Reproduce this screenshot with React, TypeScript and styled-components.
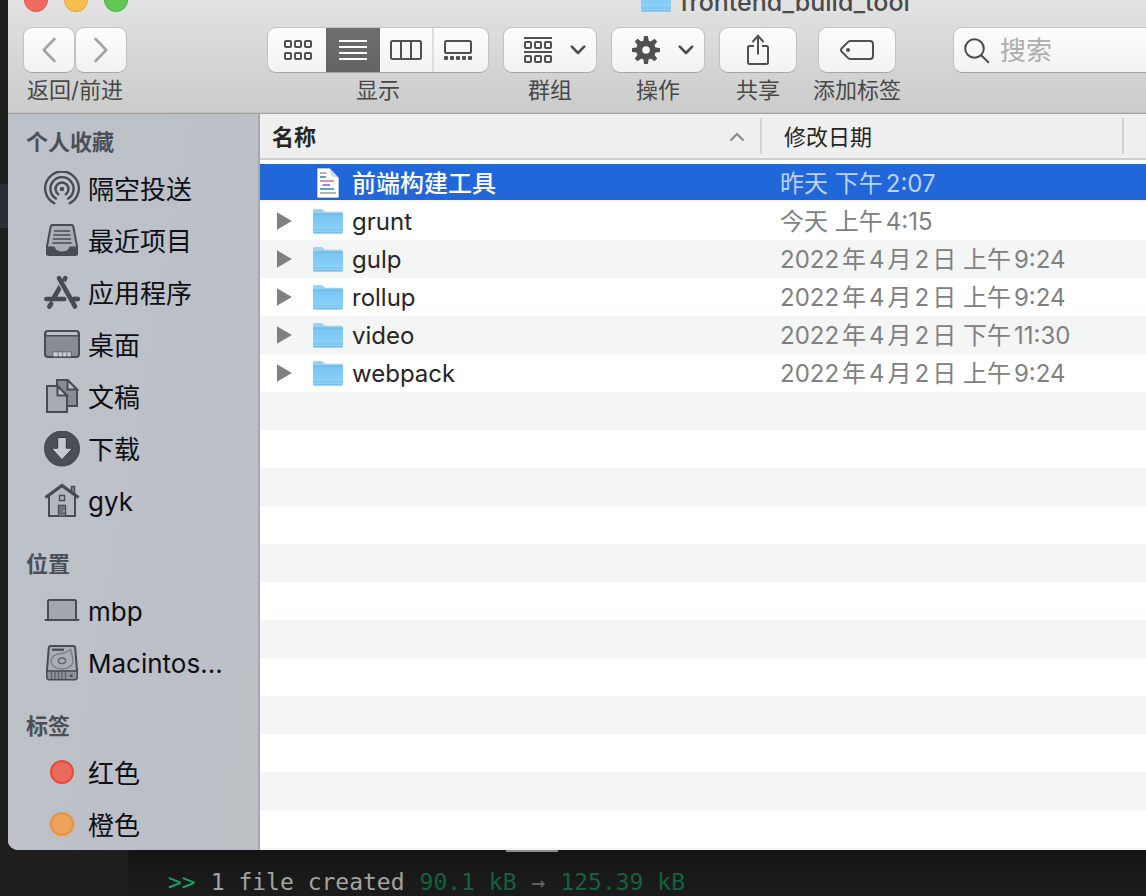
import React from "react";
import styled, { createGlobalStyle } from "styled-components";

const GlobalStyle = createGlobalStyle`
  * { box-sizing: border-box; }
  body {
    margin: 0;
    background: #1e1e1e;
    font-family: Inter, "Noto Sans CJK SC", sans-serif;
    color: #262626;
    overflow: hidden;
  }
  button, input { font: inherit; color: inherit; }
`;

const Page = styled.div`
  height: 100vh;
  display: flex;
  flex-direction: column;
`;

const Desk = styled.div`
  flex: 1;
  min-height: 0;
  display: flex;
`;

const Gutter = styled.div`
  width: 8px;
  flex: none;
  padding-top: 184px;
`;

const GutterMark = styled.div`
  height: 44px;
  background: #2d2d33;
`;

const Window = styled.main`
  flex: 1;
  min-width: 0;
  display: flex;
  flex-direction: column;
  overflow: hidden;
  border-radius: 0 0 0 10px;
  background: #fff;
`;

/* ---------- title and tool bar ---------- */

const Toolbar = styled.header`
  flex: none;
  height: 114px;
  overflow: hidden;
  background: linear-gradient(#e2e2e2, #cbcbcb);
  border-bottom: 1px solid #a3a3a3;
  box-shadow: inset 0 -1px #bebebe;
`;

const TitleBar = styled.div`
  height: 12px;
  padding-left: 16px;
  display: flex;
  align-items: flex-end;
`;

const Lights = styled.div`
  display: flex;
  gap: 16px;
`;

const Light = styled.button<{ $fill: string; $edge: string }>`
  width: 24px;
  height: 24px;
  padding: 0;
  border-radius: 50%;
  border: 1px solid ${(p) => p.$edge};
  background: ${(p) => p.$fill};
`;

const Title = styled.h1`
  margin: 0 0 0 512px;
  display: flex;
  align-items: flex-end;
  gap: 8px;
  font-size: 25px;
  line-height: 20px;
  font-weight: 500;
  color: #4a4a4a;
`;

const Tools = styled.div`
  display: flex;
  align-items: flex-start;
  gap: 16px;
  padding: 15px 0 0 15px;
`;

const Tool = styled.div<{ $after?: number }>`
  flex: none;
  display: flex;
  flex-direction: column;
  align-items: center;
  margin-right: ${(p) => p.$after ?? 0}px;
`;

const ToolLabel = styled.span`
  font-size: 22px;
  line-height: 34px;
  color: #484848;
  white-space: nowrap;
`;

const Pair = styled.div`
  display: flex;
`;

const PushButton = styled.button<{ $w: number; $menu?: boolean }>`
  width: ${(p) => p.$w}px;
  height: 46px;
  padding: 0 0 0 ${(p) => (p.$menu ? 10 : 0)}px;
  display: flex;
  align-items: center;
  justify-content: center;
  gap: 18px;
  border: 1px solid #c2c2c2;
  border-bottom-color: #a6a6a6;
  border-radius: 9px;
  background: linear-gradient(#fdfdfd, #f2f2f2);
  color: #505050;
`;

const Segments = styled.div`
  display: flex;
  width: 222px;
  height: 46px;
  border: 1px solid #c2c2c2;
  border-bottom-color: #a6a6a6;
  border-radius: 9px;
  overflow: hidden;
  background: linear-gradient(#fdfdfd, #f2f2f2);
`;

const Segment = styled.button<{ $w: number; $on?: boolean; $line?: boolean }>`
  flex: 1 1 ${(p) => p.$w}px;
  padding: 0;
  display: flex;
  align-items: center;
  justify-content: center;
  border: 0;
  border-left: ${(p) => (p.$line ? "2px solid #dedede" : "0")};
  background: ${(p) => (p.$on ? "linear-gradient(#6e6e6e, #636363)" : "none")};
  color: ${(p) => (p.$on ? "#fff" : "#505050")};
  &:first-child { padding-left: 2px; }
  &:last-child { padding-right: 6px; }
`;

const Search = styled.label`
  flex: 1;
  min-width: 0;
  height: 46px;
  padding: 2px 0 0 10px;
  display: flex;
  align-items: center;
  gap: 10px;
  border: 1px solid #c2c2c2;
  border-right: 0;
  border-bottom-color: #a0a0a0;
  border-radius: 9px 0 0 9px;
  background: linear-gradient(#fdfdfd, #f2f2f2);
`;

const SearchInput = styled.input`
  flex: 1;
  min-width: 0;
  padding: 0;
  border: 0;
  outline: 0;
  background: none;
  font-size: 26px;
  line-height: 36px;
  &::placeholder { color: #adadad; opacity: 1; }
`;

/* ---------- sidebar ---------- */

const Body = styled.div`
  flex: 1;
  min-height: 0;
  display: flex;
`;

const Sidebar = styled.nav`
  flex: none;
  width: 252px;
  padding-top: 7px;
  overflow: hidden;
  background: linear-gradient(100deg, #bdc1c9, #bcc0c5);
  border-right: 2px solid #a4a8b0;
`;

const Section = styled.section`
  & + & { margin-top: 16px; }
`;

const SectionTitle = styled.h2`
  margin: 0;
  padding-left: 18px;
  font-size: 22px;
  line-height: 42px;
  font-weight: 700;
  color: #4b4f57;
`;

const Places = styled.ul`
  margin: 0;
  padding: 0;
  list-style: none;
`;

const Place = styled.a`
  height: 52px;
  padding: 0 12px 0 36px;
  display: flex;
  align-items: center;
  gap: 8px;
  font-size: 26px;
  line-height: 36px;
  color: #0d0f14;
  text-decoration: none;
  white-space: nowrap;
  svg { flex: none; }
`;

const PlaceName = styled.span`
  padding-top: 2px;
`;

const Dot = styled.span<{ $fill: string; $edge: string }>`
  width: 24px;
  height: 24px;
  margin: 0 6px 2px;
  border-radius: 50%;
  border: 2px solid ${(p) => p.$edge};
  background: ${(p) => p.$fill};
`;

/* ---------- file list ---------- */

const Files = styled.div`
  flex: 1;
  min-width: 0;
  overflow: hidden;
  background: repeating-linear-gradient(#f4f5f5 0 38px, #fff 38px 76px) 0 50px no-repeat;
`;

const Table = styled.table`
  width: 100%;
  table-layout: fixed;
  border-collapse: separate;
  border-spacing: 0;
  tbody::before {
    content: "";
    display: block;
    height: 4px;
  }
`;

const Th = styled.th<{ $w?: number }>`
  width: ${(p) => (p.$w ? `${p.$w}px` : "auto")};
  height: 46px;
  padding: 0;
  background: #efefef;
  border-bottom: 2px solid #cfcfcf;
  text-align: left;
`;

const HeadCell = styled.div<{ $pad: number; $strong?: boolean }>`
  height: 36px;
  padding: 2px 15px 0 ${(p) => p.$pad}px;
  display: flex;
  align-items: center;
  justify-content: space-between;
  border-right: 2px solid #d4d4d4;
  font-size: 22px;
  line-height: 34px;
  font-weight: ${(p) => (p.$strong ? 700 : 400)};
  color: #262626;
`;

const Row = styled.tr<{ $on?: boolean }>`
  td {
    height: 38px;
    padding: 0;
    background: ${(p) => (p.$on ? "linear-gradient(#2167da, #2167da) 0 0 / 100% 36px no-repeat" : "none")};
    color: ${(p) => (p.$on ? "#fff" : "#262626")};
    font-weight: ${(p) => (p.$on ? 500 : 400)};
    font-size: 24px;
    line-height: 38px;
    white-space: nowrap;
    text-autospace: normal;
  }
  td + td {
    padding: 2px 0 0 18px;
    line-height: 36px;
    font-weight: 400;
    color: ${(p) => (p.$on ? "#bcd2f6" : "#808080")};
  }
`;

const NameCell = styled.div`
  height: 38px;
  padding-left: 16px;
  display: flex;
  align-items: center;
`;

const Disclosure = styled.button`
  width: 16px;
  height: 18px;
  padding: 0;
  border: 0;
  background: none;
  display: flex;
`;

const Blank = styled.span`
  width: 16px;
`;

const FileIcon = styled.span`
  width: 32px;
  height: 36px;
  margin: 0 8px 0 20px;
  display: flex;
  align-items: center;
  justify-content: center;
`;

const FileName = styled.span`
  padding-top: 2px;
  line-height: 36px;
`;

/* ---------- terminal ---------- */

const Terminal = styled.footer`
  flex: none;
  height: 46px;
  display: flex;
  background: linear-gradient(#151515, #1c1c1c);
`;

const TerminalEdge = styled.div`
  flex: none;
  width: 128px;
  background: #1f1f1f;
`;

const Output = styled.div`
  flex: 1;
`;

const Handle = styled.div`
  width: 52px;
  height: 2px;
  margin-left: 378px;
  background: #8c8c8c;
`;

const Line = styled.p`
  margin: 0;
  padding: 15px 0 0 40px;
  display: flex;
  gap: 15px;
  font: 23px/30px "DejaVu Sans Mono", monospace;
  color: #a3a3a3;
  white-space: nowrap;
`;

const Ink = styled.span<{ $c: string }>`
  color: ${(p) => p.$c};
`;

/* ---------- drawings ---------- */

const dark = "#474b52";
const mid = "#888c93";

const stroke = { fill: "none", stroke: "currentColor", strokeWidth: 2 } as const;

const Chevron = ({ dir }: { dir: "left" | "right" }) => (
  <svg width="14" height="26" viewBox="0 0 14 26" fill="none" stroke="#a3a3a3" strokeWidth="2.6" strokeLinecap="round" strokeLinejoin="round">
    <path d={dir === "left" ? "M12.4 2 1.8 13l10.600 11" : "M1.600 2 12.200 13 1.600 24"} />
  </svg>
);

const Down = () => (
  <svg width="16" height="10" viewBox="0 0 16 10" fill="none" stroke="currentColor" strokeWidth="2.600" strokeLinecap="round" strokeLinejoin="round">
    <path d="M1.800 1.600 8 8l6.200-6.400" />
  </svg>
);

const Squares = ({ y }: { y: number }) => (
  <>
    {[1, 11, 21].map((x) => (
      <rect key={x} x={x} y={y} width="6" height="6" rx="1" {...stroke} />
    ))}
  </>
);

const GridIcon = () => (
  <svg width="28" height="20" viewBox="0 0 28 20">
    <Squares y={1} />
    <Squares y={13} />
  </svg>
);

const ListIcon = () => (
  <svg width="28" height="20" viewBox="0 0 28 20">
    <path d="M0 1h28M0 7h28M0 13h28M0 19h28" {...stroke} />
  </svg>
);

const ColumnsIcon = () => (
  <svg width="32" height="20" viewBox="0 0 32 20">
    <rect x="1" y="1" width="30" height="18" rx="1.500" {...stroke} />
    <path d="M11 1v18M21 1v18" {...stroke} />
  </svg>
);

const GalleryIcon = () => (
  <svg width="28" height="20" viewBox="0 0 28 20">
    <rect x="1" y="1" width="26" height="12" rx="1.500" {...stroke} />
    {[0, 6, 12, 18, 24].map((x) => (
      <rect key={x} x={x} y="16" width="4" height="4" rx="1" fill="currentColor" />
    ))}
  </svg>
);

const GroupIcon = () => (
  <svg width="28" height="26" viewBox="0 0 28 26">
    <path d="M0 1h28M0 15h28" {...stroke} />
    <Squares y={5} />
    <Squares y={19} />
  </svg>
);

const GearIcon = () => (
  <svg width="28" height="28" viewBox="0 0 28 28">
    <circle cx="14" cy="14" r="6.800" fill="none" stroke="currentColor" strokeWidth="6" />
    {[0, 45, 90, 135, 180, 225, 270, 315].map((a) => (
      <path key={a} d="M11.200 6 12 .4Q12 0 12.400 0h3.200q.4 0 .4.4L16.800 6z" fill="currentColor" transform={`rotate(${a} 14 14)`} />
    ))}
  </svg>
);

const ShareIcon = () => (
  <svg width="22" height="32" viewBox="0 0 22 32">
    <path d="M7 12H2.500Q1 12 1 13.500v15Q1 30 2.500 30h17q1.500 0 1.500-1.500v-15Q21 12 19.500 12H15M11 20.500V2" {...stroke} />
    <path d="M5.500 8 11 1.800 16.500 8" {...stroke} />
  </svg>
);

const TagIcon = () => (
  <svg width="34" height="20" viewBox="0 0 34 20">
    <path d="M10.500 1H30q3 0 3 3v12q0 3-3 3H10.500q-1.500 0-2.600-1.100L2 12q-2-2 0-4l5.900-5.900Q9 1 10.500 1z" {...stroke} />
    <circle cx="8" cy="10" r="2" fill="currentColor" />
  </svg>
);

const SearchIcon = () => (
  <svg width="26" height="26" viewBox="0 0 26 26" fill="none" stroke="#4c4c4c" strokeWidth="2">
    <circle cx="10.500" cy="10.500" r="9.300" />
    <path d="m17.200 17.200 7.600 7.600" />
  </svg>
);

const PlaceSvg = ({ children }: { children: React.ReactNode }) => (
  <svg width="36" height="36" viewBox="0 0 36 36" fill="none" stroke={dark} strokeWidth="2">
    {children}
  </svg>
);

const AirDropIcon = () => (
  <PlaceSvg>
    <path d="M10.300 32.200a16.800 16.800 0 1 1 15.400 0" strokeWidth="2.400" strokeLinecap="round" />
    <path d="M11.900 27.600a11.600 11.600 0 1 1 12.200 0" strokeWidth="2.400" strokeLinecap="round" />
    <path d="M14.200 23.200a6.500 6.500 0 1 1 7.600 0" strokeWidth="2.400" strokeLinecap="round" />
    <circle cx="18" cy="18" r="2.200" fill={dark} stroke="none" />
  </PlaceSvg>
);

const RecentsIcon = () => (
  <PlaceSvg>
    <path d="M8.500 2h19q1.500 0 1.800 1.500L33 23v7.500q0 1.500-1.500 1.500h-27Q3 32 3 30.500V23L6.700 3.500Q7 2 8.500 2z" fill="#a9adb5" />
    <path d="M10 8h16M9.500 12h17M9 16h18M8.500 20h19" strokeWidth="1.700" />
    <path d="M3 23.500h6.500q1 0 1.500 1.200 1.500 3.800 7 3.800t7-3.800q.5-1.200 1.500-1.200H33v7q0 1.500-1.500 1.500h-27Q3 32 3 30.500z" fill={dark} stroke="none" />
  </PlaceSvg>
);

const AppsIcon = () => (
  <PlaceSvg>
    <g strokeWidth="4.600" strokeLinecap="round">
      <path d="M21.300 3.200 10 22.500M7.200 28.800 5.300 31.600M2.300 24h18M29 24h4.700" />
      <path d="M17.500 7.600 29.500 28.900" stroke="#bdc1c8" strokeWidth="7" strokeLinecap="butt" />
      <path d="M15 3.200 31 31.500M30 24h3.700" />
    </g>
  </PlaceSvg>
);

const DesktopIcon = () => (
  <PlaceSvg>
    <rect x="1" y="4" width="34" height="26" rx="3" fill={mid} />
    <path d="M3 5h30v3H3z" fill="#bdc1c8" stroke="none" />
    <path d="M1 8.700h34" strokeWidth="1.600" />
    <path d="M9.500 25.500h4v4h-4zM14.800 25.500h3v4h-3zM19.200 25.500h3v4h-3zM23.500 25.500h3v4h-3z" fill="#c9ccd2" stroke="none" />
    <path d="M8.500 29v-4.500h19V29" stroke="#70747b" strokeWidth="1" />
  </PlaceSvg>
);

const DocumentsIcon = () => (
  <PlaceSvg>
    <path d="M13 1h10.500L33 10.500V27H13z" fill={mid} />
    <path d="M23.500 1v9.500H33z" fill="#bdc1c8" />
    <path d="M3 7h10.500L23 16.500V33H3z" fill="#a7abb2" />
    <path d="M13.500 7v9.500H23z" fill="#bdc1c8" />
  </PlaceSvg>
);

const DownloadsIcon = () => (
  <PlaceSvg>
    <circle cx="18" cy="17.500" r="17" fill="#4b4f57" />
    <path d="M13.700 6.500h8.600v10.700h6.400L18 28.800 7.300 17.200h6.400z" fill="#c6c9cf" stroke="#34373d" strokeWidth="1" />
  </PlaceSvg>
);

const HomeIcon = () => (
  <PlaceSvg>
    <path d="M27.500 11V3.500h3V13" fill={mid} strokeWidth="1.500" />
    <path d="M5 12.500 18 2.500l13 10V33H5z" fill="#b4b8bf" />
    <path d="M1.500 14.500 18 2.500l16.500 12" strokeWidth="3.200" />
    <path d="M15.500 12.500h5v5h-5zM14.500 22.500h7V33h-7z" strokeWidth="1.400" />
    <path d="M15 23h6v10h-6z" fill="#6c7077" stroke="none" />
    <circle cx="20" cy="28" r=".8" fill="#c0c4ca" stroke="none" />
  </PlaceSvg>
);

const LaptopIcon = () => (
  <PlaceSvg>
    <rect x="4" y="7" width="28" height="20" rx="1.500" fill="#a3a6ad" />
    <path d="M0 26h36l-1.500 2h-33z" fill={dark} stroke="none" />
  </PlaceSvg>
);

const DiskIcon = () => (
  <PlaceSvg>
    <path d="M7 .9h22q2 0 2.200 2L33 25v7q0 2.500-2.500 2.500h-25Q3 34.500 3 32v-7L4.800 2.900Q5 .9 7 .9z" fill="#a9adb4" />
    <path d="M3.500 26h29v6q0 2-2 2h-25q-2 0-2-2z" fill="#8b8f96" stroke="none" />
    <path d="M3 26h30" strokeWidth="1.600" />
    <path d="M8 4.700h12" strokeWidth="2.200" />
    <path d="M26.500 4.500c1 5 2.500 7.500 2.500 11.500 0 4.500-5 8-11 8S7 20.500 7 16s5-7.500 10.500-7.500c4 0 5-1.500 9-4z" stroke="#7a7e85" strokeWidth="1.300" />
    <ellipse cx="18" cy="15.800" rx="3.600" ry="2.800" stroke="#5d6168" strokeWidth="1.400" />
    <path d="M7.500 27v7M11 27v7M14.500 27v7M18 27v7M21.500 27v7" stroke="#5d6168" strokeWidth="1.300" />
    <path d="M26 29.500h2.500v2.500H26z" fill={dark} stroke="none" />
  </PlaceSvg>
);

const FolderIcon = () => (
  <svg width="32" height="26" viewBox="0 0 32 26">
    <defs>
      <linearGradient id="folder" x1="0" y1="0" x2="0" y2="1">
        <stop offset="0" stopColor="#78c5f3" />
        <stop offset="1" stopColor="#90d3f8" />
      </linearGradient>
    </defs>
    <path d="M1 2.500Q1 1 2.500 1h6.700q1 0 1.700.7l1.600 1.500q.6.600 1.500.6h15.500q1.500 0 1.500 1.500V8H1z" fill="#97d3f4" />
    <path d="M1 6h30v17.500q0 1.500-1.500 1.500h-27Q1 25 1 23.500z" fill="url(#folder)" />
    <path d="M1.500 6h29" stroke="#62b1e2" strokeWidth="1" />
    <path d="M1.500 22h29" stroke="#79c0ea" strokeWidth="1" />
    <path d="M1.300 24.500q.5.500 1.200.5h27q.7 0 1.200-.5" fill="none" stroke="#5fa6d2" strokeWidth="1" />
  </svg>
);

const DocIcon = () => (
  <svg width="24" height="32" viewBox="0 0 24 32">
    <path d="M1 1h12.500L23 11v20H1z" fill="#fdfdfd" stroke="#1b54b3" strokeWidth=".6" />
    <path d="M13.500 1 15 8q.3 1.300 1.600 1.600L23 11z" fill="#d5d8dc" />
    <g fill="none" strokeWidth="2">
      <path d="M4 6h6.500M4 26h16" stroke="#b3b3b3" />
      <path d="M4 10h6M4 22h14" stroke="#5fa5b5" />
      <path d="M4 14h14" stroke="#d39aa0" />
      <path d="M6.500 18H14" stroke="#9a83f5" />
    </g>
  </svg>
);

const Triangle = () => (
  <svg width="16" height="18" viewBox="0 0 16 18">
    <path d="M1 .3v17.400L15.800 9z" fill="#7f7f7f" />
  </svg>
);

/* ---------- data ---------- */

const favourites = [
  { name: "隔空投送", icon: <AirDropIcon /> },
  { name: "最近项目", icon: <RecentsIcon /> },
  { name: "应用程序", icon: <AppsIcon /> },
  { name: "桌面", icon: <DesktopIcon /> },
  { name: "文稿", icon: <DocumentsIcon /> },
  { name: "下载", icon: <DownloadsIcon /> },
  { name: "gyk", icon: <HomeIcon /> },
];

const locations = [
  { name: "mbp", icon: <LaptopIcon /> },
  { name: "Macintos...", icon: <DiskIcon /> },
];

const tags = [
  { name: "红色", icon: <Dot $fill="#ea6a5d" $edge="#e8493c" /> },
  { name: "橙色", icon: <Dot $fill="#eca45c" $edge="#ea9236" /> },
];

const sections = [
  { title: "个人收藏", items: favourites },
  { title: "位置", items: locations },
  { title: "标签", items: tags },
];

const files = [
  { name: "前端构建工具", date: "昨天 下午2:07", doc: true },
  { name: "grunt", date: "今天 上午4:15" },
  { name: "gulp", date: "2022年4月2日 上午9:24" },
  { name: "rollup", date: "2022年4月2日 上午9:24" },
  { name: "video", date: "2022年4月2日 下午11:30" },
  { name: "webpack", date: "2022年4月2日 上午9:24" },
];

export default function App() {
  return (
    <Page>
      <GlobalStyle />
      <Desk>
        <Gutter>
          <GutterMark />
        </Gutter>
        <Window>
          <Toolbar>
            <TitleBar>
              <Lights>
                <Light aria-label="关闭" $fill="#ed6b60" $edge="#d9584d" />
                <Light aria-label="最小化" $fill="#f5bf4f" $edge="#dba640" />
                <Light aria-label="缩放" $fill="#62c655" $edge="#4eae41" />
              </Lights>
              <Title>
                <FolderIcon />
                frontend_build_tool
              </Title>
            </TitleBar>
            <Tools>
              <Tool $after={124}>
                <Pair>
                  <PushButton $w={52} aria-label="返回"><Chevron dir="left" /></PushButton>
                  <PushButton $w={52} aria-label="前进"><Chevron dir="right" /></PushButton>
                </Pair>
                <ToolLabel>返回/前进</ToolLabel>
              </Tool>
              <Tool $after={-2}>
                <Segments role="group" aria-label="显示">
                  <Segment $w={58} aria-label="图标"><GridIcon /></Segment>
                  <Segment $w={54} aria-label="列表" aria-pressed="true" $on><ListIcon /></Segment>
                  <Segment $w={52} aria-label="分栏"><ColumnsIcon /></Segment>
                  <Segment $w={56} aria-label="画廊" $line><GalleryIcon /></Segment>
                </Segments>
                <ToolLabel>显示</ToolLabel>
              </Tool>
              <Tool $after={-2}>
                <PushButton $w={94} $menu aria-label="群组"><GroupIcon /><Down /></PushButton>
                <ToolLabel>群组</ToolLabel>
              </Tool>
              <Tool $after={-2}>
                <PushButton $w={94} $menu aria-label="操作"><GearIcon /><Down /></PushButton>
                <ToolLabel>操作</ToolLabel>
              </Tool>
              <Tool>
                <PushButton $w={78} aria-label="共享"><ShareIcon /></PushButton>
                <ToolLabel>共享</ToolLabel>
              </Tool>
              <Tool $after={36}>
                <PushButton $w={78} aria-label="添加标签"><TagIcon /></PushButton>
                <ToolLabel>添加标签</ToolLabel>
              </Tool>
              <Search>
                <SearchIcon />
                <SearchInput type="search" placeholder="搜索" aria-label="搜索" />
              </Search>
            </Tools>
          </Toolbar>
          <Body>
            <Sidebar>
              {sections.map((s) => (
                <Section key={s.title}>
                  <SectionTitle>{s.title}</SectionTitle>
                  <Places>
                    {s.items.map((i) => (
                      <li key={i.name}>
                        <Place href="#">
                          {i.icon}
                          <PlaceName>{i.name}</PlaceName>
                        </Place>
                      </li>
                    ))}
                  </Places>
                </Section>
              ))}
            </Sidebar>
            <Files>
              <Table>
                <thead>
                  <tr>
                    <Th $w={502} scope="col" aria-sort="ascending">
                      <HeadCell $pad={12} $strong>
                        名称
                        <svg width="16" height="10" viewBox="0 0 16 10" fill="none" stroke="#8a8a8a" strokeWidth="2">
                          <path d="M1.500 8.500 8 2l6.500 6.500" />
                        </svg>
                      </HeadCell>
                    </Th>
                    <Th $w={362} scope="col">
                      <HeadCell $pad={22}>修改日期</HeadCell>
                    </Th>
                    <Th />
                  </tr>
                </thead>
                <tbody>
                  {files.map((f) => (
                    <Row key={f.name} $on={f.doc}>
                      <td>
                        <NameCell>
                          {f.doc ? (
                            <Blank />
                          ) : (
                            <Disclosure aria-label={`展开 ${f.name}`}><Triangle /></Disclosure>
                          )}
                          <FileIcon>{f.doc ? <DocIcon /> : <FolderIcon />}</FileIcon>
                          <FileName>{f.name}</FileName>
                        </NameCell>
                      </td>
                      <td>{f.date}</td>
                      <td />
                    </Row>
                  ))}
                </tbody>
              </Table>
            </Files>
          </Body>
        </Window>
      </Desk>
      <Terminal>
        <TerminalEdge />
        <Output>
          <Handle />
          <Line>
            <Ink $c="#17a068">&gt;&gt;</Ink>
            <span>1 file created</span>
            <Ink $c="#17603f">90.1 kB</Ink>
            <Ink $c="#666">→</Ink>
            <Ink $c="#17603f">125.39 kB</Ink>
          </Line>
        </Output>
      </Terminal>
    </Page>
  );
}
